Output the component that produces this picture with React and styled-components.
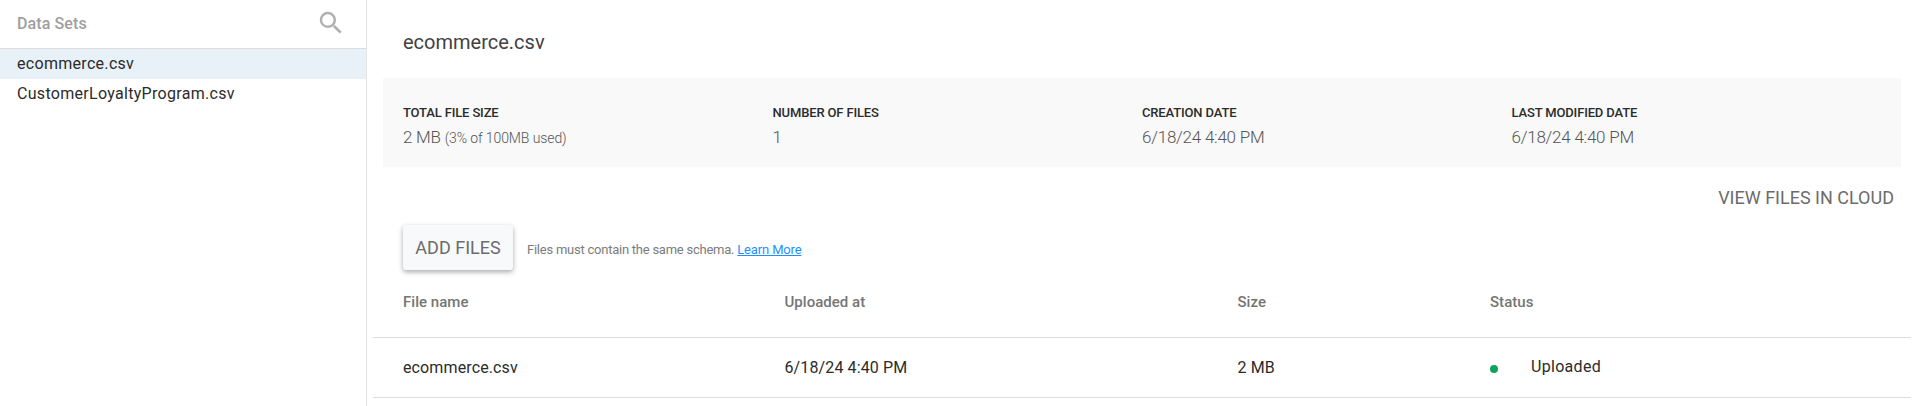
import React from 'react';
import styled, { createGlobalStyle } from 'styled-components';

const GlobalStyle = createGlobalStyle`
  * { box-sizing: border-box; }
  body {
    margin: 0;
    background: #fff;
    color: #2b2b2b;
    font-family: Roboto, sans-serif;
    font-size: 16px;
  }
`;

const Page = styled.div`
  display: flex;
  height: 406px;
  overflow: hidden;
`;

const Sidebar = styled.aside`
  width: 367px;
  flex: none;
  border-right: 1px solid #e4e4e4;
`;

const SidebarHeader = styled.header`
  display: flex;
  align-items: center;
  justify-content: space-between;
  height: 49px;
  padding: 0 20px 2px 17px;
  border-bottom: 1px solid #dcdfe0;
  color: #9e9e9e;
  font-weight: 500;
  font-size: 16px;
  letter-spacing: 0.1px;
`;

const SearchIcon = styled.svg`
  width: 30px;
  height: 30px;
  fill: #b0b0b0;
`;

const DataSet = styled.div`
  height: 30px;
  line-height: 29px;
  padding-left: 17px;
  letter-spacing: 0.3px;
  background: ${(p) => (p.$active ? '#e8f1f8' : 'transparent')};
`;

const Main = styled.main`
  flex: 1;
  min-width: 0;
  padding: 0 5px 0 6px;
`;

const Title = styled.h1`
  margin: 0;
  height: 78px;
  padding: 30px 0 0 30px;
  font-size: 20px;
  line-height: 24px;
  font-weight: 400;
  color: #424242;
`;

const Summary = styled.section`
  display: grid;
  grid-template-columns: repeat(4, 1fr);
  height: 89px;
  margin: 0 10px;
  padding: 26px 20px 0;
  background: #f9f9f9;
`;

const Label = styled.div`
  font-size: 13px;
  line-height: 18px;
  font-weight: 500;
  letter-spacing: -0.15px;
`;

const Value = styled.div`
  margin-top: 3px;
  line-height: 24px;
  font-size: 17px;
  font-weight: 300;
  letter-spacing: -0.24px;
  color: #555;
`;

const Note = styled.span`
  font-size: 14px;
  letter-spacing: -0.1px;
`;

const CloudBar = styled.div`
  display: flex;
  justify-content: flex-end;
  height: 58px;
  padding: 19px 17px 0 0;
`;

const TextButton = styled.button`
  border: 0;
  padding: 0;
  height: 24px;
  background: none;
  font: 400 18px/24px Roboto, sans-serif;
  color: #6c6c6c;
`;

const RaisedButton = styled(TextButton)`
  width: 110px;
  height: 45px;
  border-radius: 3px;
  background: #f8f9fb;
  box-shadow: 0 2px 5px rgba(0, 0, 0, 0.34);
`;

const AddBar = styled.div`
  display: flex;
  height: 45px;
  padding-left: 30px;
`;

const Hint = styled.p`
  margin: 16px 0 0 14px;
  font-size: 13px;
  line-height: 18px;
  letter-spacing: -0.24px;
  color: #7c7c7c;
`;

const Link = styled.a`
  color: #1e90ff;
  letter-spacing: -0.15px;
  text-decoration: underline;
`;

const TableRow = styled.div`
  display: grid;
  grid-template-columns: 381.5px 453px 252.5px 1fr;
  padding-left: 30px;
  height: ${(p) => (p.$head ? 68 : 60)}px;
  line-height: ${(p) => (p.$head ? 64 : 60)}px;
  border-bottom: 1px solid #dcdfe0;
  font-size: ${(p) => (p.$head ? 15 : 16)}px;
  font-weight: ${(p) => (p.$head ? 500 : 400)};
  letter-spacing: ${(p) => (p.$head ? 0.03 : 0.12)}px;
  color: ${(p) => (p.$head ? '#757575' : '#2b2b2b')};
`;

const Status = styled.div`
  display: flex;
  align-items: center;
  gap: 33px;
  line-height: 58px;
  letter-spacing: 0.3px;
`;

const Dot = styled.span`
  width: 8px;
  height: 8px;
  margin-top: 2px;
  border-radius: 50%;
  background: #0fa35c;
`;

const StatusText = styled.span`
  align-self: flex-start;
`;

const dataSets = ['ecommerce.csv', 'CustomerLoyaltyProgram.csv'];

const facts = [
  { label: 'TOTAL FILE SIZE', value: '2 MB', note: '(3% of 100MB used)' },
  { label: 'NUMBER OF FILES', value: '1' },
  { label: 'CREATION DATE', value: '6/18/24 4:40 PM' },
  { label: 'LAST MODIFIED DATE', value: '6/18/24 4:40 PM' },
];

const files = [{ name: 'ecommerce.csv', uploaded: '6/18/24 4:40 PM', size: '2 MB', status: 'Uploaded' }];

export default function App() {
  return (
    <>
      <GlobalStyle />
      <Page>
        <Sidebar>
          <SidebarHeader>
            Data Sets
            <SearchIcon viewBox="0 0 24 24">
              <path d="M15.5 14h-.79l-.28-.27A6.471 6.471 0 0 0 16 9.5 6.5 6.5 0 1 0 9.5 16c1.61 0 3.09-.59 4.23-1.57l.27.28v.79l5 4.99L20.49 19l-4.99-5zm-6 0C7.01 14 5 11.99 5 9.5S7.01 5 9.5 5 14 7.01 14 9.5 11.99 14 9.5 14z" />
            </SearchIcon>
          </SidebarHeader>
          {dataSets.map((name, i) => (
            <DataSet key={name} $active={i === 0}>{name}</DataSet>
          ))}
        </Sidebar>
        <Main>
          <Title>ecommerce.csv</Title>
          <Summary>
            {facts.map((f) => (
              <div key={f.label}>
                <Label>{f.label}</Label>
                <Value>
                  {f.value} {f.note && <Note>{f.note}</Note>}
                </Value>
              </div>
            ))}
          </Summary>
          <CloudBar>
            <TextButton>VIEW FILES IN CLOUD</TextButton>
          </CloudBar>
          <AddBar>
            <RaisedButton>ADD FILES</RaisedButton>
            <Hint>
              Files must contain the same schema. <Link>Learn More</Link>
            </Hint>
          </AddBar>
          <TableRow $head>
            <span>File name</span>
            <span>Uploaded at</span>
            <span>Size</span>
            <span>Status</span>
          </TableRow>
          {files.map((f) => (
            <TableRow key={f.name}>
              <span>{f.name}</span>
              <span>{f.uploaded}</span>
              <span>{f.size}</span>
              <Status>
                <Dot />
                <StatusText>{f.status}</StatusText>
              </Status>
            </TableRow>
          ))}
        </Main>
      </Page>
    </>
  );
}
